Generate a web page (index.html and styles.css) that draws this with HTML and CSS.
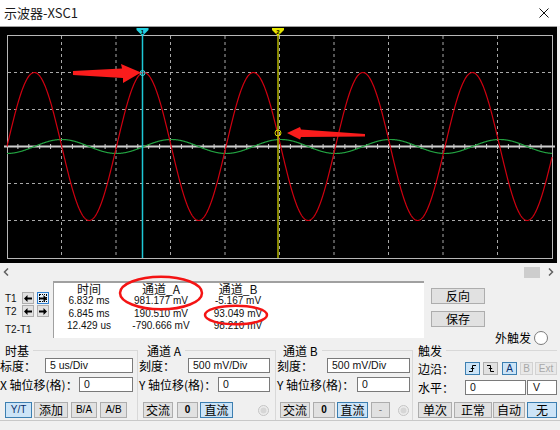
FILE: index.html
```html
<!DOCTYPE html>
<html lang="zh-CN">
<head>
<meta charset="utf-8">
<title>示波器-XSC1</title>
<link rel="stylesheet" href="styles.css">
</head>
<body>
<div class="titlebar">
  <span class="title">示波器-XSC1</span>
  <svg class="close" viewBox="0 0 10 10"><path d="M0.5 0.5L9.5 9.5M9.5 0.5L0.5 9.5"/></svg>
</div>

<div class="scope">
  <svg width="557" height="236" viewBox="0 27 557 236">
    <rect class="frame" x="7.5" y="35.5" width="545" height="223"/>
    <path class="grid" d="M61.5 36V258M116 36V258M170.5 36V258M225 36V258M279.5 36V258M334 36V258M388.5 36V258M443 36V258M497.5 36V258"/>
    <path class="grid" d="M8 72.5H552M8 109.5H552M8 183.5H552M8 220.5H552"/>
    <path class="axis" d="M4 146.5H555"/>
    <path class="ticks" id="ticks" d=""/>
    <polyline class="wave-b" id="wave-b" points=""/>
    <polyline class="wave-a" id="wave-a" points=""/>
    <path class="cur1" d="M142.5 33V258"/>
    <path class="cur2" d="M278 33V258"/>
    <polygon class="mk1" points="136.5,28 148.5,28 148.5,30 142.5,36 136.5,30"/>
    <text class="mk-num" x="142.5" y="33.5" text-anchor="middle">1</text>
    <polygon class="mk2" points="272,28 284,28 284,30 278,36 272,30"/>
    <text class="mk-num" x="278" y="33.5" text-anchor="middle">2</text>
    <circle class="dot1" cx="142.5" cy="73" r="2.5"/>
    <circle class="dot2" cx="278" cy="133" r="3"/>
  </svg>
</div>

<div class="hscroll">
  <svg class="sarrow" viewBox="0 0 6 8"><path d="M5 0.5L1.5 4L5 7.5"/></svg>
  <div class="track"><div class="thumb"></div></div>
  <svg class="sarrow" viewBox="0 0 6 8"><path d="M1 0.5L4.5 4L1 7.5"/></svg>
</div>

<div class="meas">
  <div class="tctrl">
    <span>T1</span>
    <button class="abtn"><svg viewBox="0 0 8 7"><path d="M0 3.5L3.5 0V2.5H8V4.5H3.5V7Z"/></svg></button>
    <button class="abtn on"><svg viewBox="0 0 8 7"><path d="M8 3.5L4.5 0V2.5H0V4.5H4.5V7Z"/></svg></button>
    <span>T2</span>
    <button class="abtn"><svg viewBox="0 0 8 7"><path d="M0 3.5L3.5 0V2.5H8V4.5H3.5V7Z"/></svg></button>
    <button class="abtn"><svg viewBox="0 0 8 7"><path d="M8 3.5L4.5 0V2.5H0V4.5H4.5V7Z"/></svg></button>
    <span class="tdiff">T2-T1</span>
  </div>
  <div class="mtable">
    <span class="hd">时间</span><span class="hd">通道_A</span><span class="hd">通道_B</span>
    <span>6.832 ms</span><span>981.177 mV</span><span>-5.167 mV</span>
    <span>6.845 ms</span><span>190.510 mV</span><span>93.049 mV</span>
    <span>12.429 us</span><span>-790.666 mV</span><span>98.210 mV</span>
  </div>
  <div class="mright">
    <div class="mbtns">
      <button class="btn mbtn">反向</button>
      <button class="btn mbtn">保存</button>
    </div>
    <div class="ext">
      <span>外触发</span>
      <svg class="radio" viewBox="0 0 14 14"><circle cx="7" cy="7" r="6.5"/></svg>
    </div>
  </div>
</div>

<div class="groups">
  <div class="group g-time">
    <div class="ghead"><span>时基</span></div>
    <div class="gbody">
      <div class="row"><span>标度：</span><div class="inp w88">5 us/Div</div></div>
      <div class="row"><span>X 轴位移(格)：</span><div class="inp w54">0</div></div>
      <div class="row btns">
        <button class="btn lt on w27">Y/T</button>
        <button class="btn w34 ml2">添加</button>
        <button class="btn lt w26 ml3">B/A</button>
        <button class="btn lt w27 ml3">A/B</button>
      </div>
    </div>
  </div>
  <div class="group g-a">
    <div class="ghead"><span>通道 A</span></div>
    <div class="gbody">
      <div class="row"><span>刻度：</span><div class="inp w82">500 mV/Div</div></div>
      <div class="row"><span>Y 轴位移(格)：</span><div class="inp w52">0</div></div>
      <div class="row btns">
        <button class="btn w30">交流</button>
        <button class="btn lt b w21 ml4">0</button>
        <button class="btn on w33 ml2">直流</button>
        <svg class="dradio ml25" viewBox="0 0 11 11"><circle class="o" cx="5.5" cy="5.5" r="5"/><circle class="i" cx="5.5" cy="5.5" r="3"/></svg>
      </div>
    </div>
  </div>
  <div class="group g-b">
    <div class="ghead"><span>通道 B</span></div>
    <div class="gbody">
      <div class="row"><span>刻度：</span><div class="inp w83">500 mV/Div</div></div>
      <div class="row"><span>Y 轴位移(格)：</span><div class="inp w53">0</div></div>
      <div class="row btns">
        <button class="btn w30">交流</button>
        <button class="btn lt b w22 ml3">0</button>
        <button class="btn on w31 ml2">直流</button>
        <button class="btn lt dash w19 ml3">-</button>
        <svg class="dradio ml8" viewBox="0 0 11 11"><circle class="o" cx="5.5" cy="5.5" r="5"/><circle class="i" cx="5.5" cy="5.5" r="3"/></svg>
      </div>
    </div>
  </div>
  <div class="group g-trig">
    <div class="ghead"><span>触发</span></div>
    <div class="gbody">
      <div class="row"><span>边沿：</span>
        <div class="edge">
          <button class="btn sm on w15"><svg class="eicon" viewBox="0 0 9 9"><path d="M1 7.5H4.5V1.5H8M2.8 4.5H6.2"/></svg></button>
          <button class="btn sm w15 ml3"><svg class="eicon" viewBox="0 0 9 9"><path d="M1 1.5H4.5V7.5H8M2.8 4.5H6.2"/></svg></button>
          <button class="btn sm lt on w15 ml4">A</button>
          <button class="btn sm lt off w13 ml3">B</button>
          <button class="btn sm lt off w22 ml2">Ext</button>
        </div>
      </div>
      <div class="row"><span>水平：</span><div class="inp w61">0</div><div class="inp vbox">V</div></div>
      <div class="row btns">
        <button class="btn w34">单次</button>
        <button class="btn w38 ml2">正常</button>
        <button class="btn w32 ml1">自动</button>
        <button class="btn on w30 ml2">无</button>
      </div>
    </div>
  </div>
</div>

<svg class="annot" width="560" height="430" viewBox="0 0 560 430">
  <polygon points="73,71 122,68.5 121,64 141,72.5 123,83 123,78 73,75"/>
  <polygon points="287,133 300,127 301,129.5 365,134 365,136.5 301,137 300,139.5"/>
  <ellipse cx="161" cy="293" rx="41" ry="16.3"/>
  <ellipse cx="236" cy="315" rx="31" ry="9.3"/>
</svg>

<script src="script.js"></script>
</body>
</html>
```

FILE: styles.css
```css
* { box-sizing: border-box; }
html, body { margin: 0; padding: 0; }
body {
  width: 560px; height: 430px; overflow: hidden; position: relative;
  background: #f0f0f0; color: #000;
  font-family: "Noto Sans CJK SC", "Liberation Sans", sans-serif;
  font-size: 12px; line-height: 14px;
}

/* title bar */
.titlebar { height: 26px; background: #fff; display: flex; align-items: center; justify-content: space-between; padding: 0 11px 0 4px; }
.title { font-size: 13px; line-height: 16px; color: #1b1b1b; }
.close { display: block; width: 10px; height: 10px; }
.close path { stroke: #111; stroke-width: 1; fill: none; }

/* scope screen */
.scope { width: 557px; height: 237px; border-top: 1px solid #a0a0a0; background: #000; }
.scope svg { display: block; }
.frame { fill: none; stroke: #b8b8b8; stroke-width: 1; }
.grid { fill: none; stroke: #a8a8a8; stroke-width: 1; stroke-dasharray: 3 3; }
.axis { stroke: #cfcfcf; stroke-width: 2; fill: none; }
.ticks { stroke: #cfcfcf; stroke-width: 1; fill: none; }
.wave-a { fill: none; stroke: #d00010; stroke-width: 1.2; }
.wave-b { fill: none; stroke: #22a040; stroke-width: 1.2; }
.cur1 { stroke: #1ec8d6; stroke-width: 1.5; }
.cur2 { stroke: #b4b400; stroke-width: 1.5; }
.mk1 { fill: #22d0e0; }
.mk2 { fill: #e6e600; }
.mk-num { font: bold 6px "Liberation Sans", sans-serif; fill: #000; }
.dot1 { fill: none; stroke: #3ee0e8; stroke-width: 1; }
.dot2 { fill: none; stroke: #d8d800; stroke-width: 1; }

/* scrollbar */
.hscroll { width: 557px; height: 17px; display: flex; align-items: center; padding: 0 3px; }
.sarrow { display: block; width: 6px; height: 8px; }
.sarrow path { fill: none; stroke: #606060; stroke-width: 1.5; }
.track { flex: 1; height: 100%; display: flex; justify-content: flex-end; align-items: flex-end; padding: 0 8px 2px 0; }
.thumb { width: 16px; height: 11px; background: #cdcdcd; }

/* measurement area */
.meas { height: 60px; display: flex; }
.tctrl {
  width: 53px; padding: 12px 0 0 5px;
  display: grid; grid-template-columns: 17px 15px 12px; grid-template-rows: 12px 12px auto;
  row-gap: 1px; align-content: start; align-items: center;
  font-family: "Liberation Sans", sans-serif; font-size: 10px; line-height: 11px; color: #111;
}
.tdiff { grid-column: 1 / -1; margin-top: 6px; }
.abtn { width: 12px; height: 12px; padding: 0; margin: 0; border: 1px solid #adadad; background: #e1e1e1; display: flex; align-items: center; justify-content: center; }
.abtn svg { display: block; width: 8px; height: 7px; }
.abtn path { fill: #000; }
.abtn.on { border-color: #2f7fd0; background: #e5f1fb; outline: 1px dotted #000; outline-offset: -3px; }

.mtable {
  width: 371px; height: 57px; margin-top: 1px; background: #fff;
  border-top: 2px solid #a0a0a0; border-left: 1px solid #a0a0a0; padding-left: 10px;
  display: grid; grid-template-columns: 50px 94px 60px; grid-template-rows: 12px repeat(3, 12.5px);
  align-content: start; text-align: center;
  font-family: "Liberation Sans", sans-serif; font-size: 10px; line-height: 12.5px; color: #111;
}
.mtable .hd { font-family: "Noto Sans CJK SC", sans-serif; font-size: 12px; line-height: 12px; }

.mright { flex: 1; display: flex; padding-left: 7px; }
.mbtns { display: flex; flex-direction: column; gap: 7px; padding-top: 8px; }
.mbtn { width: 54px; height: 20px; }
.ext { align-self: flex-end; margin: 0 0 -5px 10px; display: flex; align-items: center; gap: 3px; line-height: 14px; }
.radio { display: block; width: 14px; height: 14px; }
.radio circle { fill: #fff; stroke: #7a7a7a; stroke-width: 1; }

/* buttons */
.btn {
  font-family: "Noto Sans CJK SC", sans-serif; font-size: 12px; line-height: 14px; color: #000;
  background: #e1e1e1; border: 1px solid #adadad; padding: 0; margin: 0; height: 16px;
  display: flex; align-items: center; justify-content: center;
}
.btn.on { background: #cce4f7; border-color: #3c7fb1; }
.btn.off { background: #e9e9e9; border-color: #d2d2d2; color: #a8a8a8; }
.btn.lt { font-family: "Liberation Sans", sans-serif; font-size: 10px; }
.btn.lt.on { color: #0a2f6a; }
.btn.b { font-weight: bold; }
.btn.dash { color: #777; }
.btn.sm { height: 13px; }
.eicon { display: block; width: 9px; height: 9px; }
.eicon path { fill: none; stroke: #000; stroke-width: 1; }

.w13 { width: 13px; } .w15 { width: 15px; } .w19 { width: 19px; } .w21 { width: 21px; }
.w22 { width: 22px; } .w26 { width: 26px; } .w27 { width: 27px; } .w30 { width: 30px; }
.w31 { width: 31px; } .w32 { width: 32px; } .w33 { width: 33px; } .w34 { width: 34px; }
.w38 { width: 38px; } .w52 { width: 52px; } .w53 { width: 53px; } .w54 { width: 54px; }
.w61 { width: 61px; } .w82 { width: 82px; } .w83 { width: 83px; } .w88 { width: 88px; }
.ml1 { margin-left: 1px; } .ml2 { margin-left: 2px; } .ml3 { margin-left: 3px; } .ml4 { margin-left: 4px; }
.ml8 { margin-left: 8px; } .ml25 { margin-left: 25px; }

/* control groups */
.groups { height: 81px; display: flex; border-bottom: 1px solid #c8c8c8; }
.group { display: flex; flex-direction: column; }
.g-time { width: 138px; }
.g-a { width: 138px; }
.g-b { width: 137px; }
.g-trig { width: 144px; }
.ghead { height: 18px; display: flex; align-items: flex-start; }
.ghead span { margin-top: 4px; line-height: 13px; }
.ghead::after { content: ""; flex: 1; height: 8px; margin-top: 10px; margin-left: 4px; border-top: 1px solid #d8d8d8; border-right: 1px solid #d8d8d8; }
.g-time .ghead span { margin-left: 5px; }
.g-a .ghead span { margin-left: 9px; }
.g-b .ghead span { margin-left: 7px; }
.g-trig .ghead span { margin-left: 5px; }
.g-trig .ghead::after { border-right: none; }

.gbody { flex: 1; border-right: 1px solid #d8d8d8; display: flex; flex-direction: column; }
.g-time .gbody { padding: 0 4px 0 0; }
.g-a .gbody { padding: 0 5px 0 1px; }
.g-b .gbody { padding: 0 2px 0 1px; }
.g-trig .gbody { padding: 0 0 0 5px; border-right: none; }

.row { height: 15px; display: flex; align-items: center; white-space: nowrap; }
.row + .row { margin-top: 4px; }
.row.btns { height: 16px; margin-top: 10px; }
.g-time .row.btns { padding-left: 5px; }
.g-a .row.btns { padding-left: 4px; }
.g-b .row.btns { padding-left: 3px; }
.g-trig .row:first-child { margin-top: 3px; }
.g-trig .row.btns { margin-top: 7px; }

.inp {
  height: 15px; background: #fff; border: 1px solid #7a7a7a; margin-left: auto;
  font-family: "Liberation Sans", sans-serif; font-size: 10.5px; line-height: 13px; padding-left: 4px; color: #111;
}
.inp.vbox { width: 30px; margin-left: 1px; padding-left: 5px; }
.edge { margin-left: auto; display: flex; align-items: center; }

.dradio { display: block; width: 11px; height: 11px; }
.dradio .o { fill: #ececec; stroke: #c4c4c4; stroke-width: 1; }
.dradio .i { fill: #d6d6d6; }

/* annotations drawn over the screenshot */
.annot { position: absolute; left: 0; top: 0; pointer-events: none; }
.annot polygon { fill: #fa1c1c; }
.annot ellipse { fill: none; stroke: #f41414; stroke-width: 2.5; }
```

FILE: script.js
```js
(function () {
  var P = 109.5, X0 = 7;
  function pts(f) {
    var a = [];
    for (var x = 7; x <= 552; x += 0.5) a.push(x + ',' + f(x).toFixed(2));
    return a.join(' ');
  }
  document.getElementById('wave-a').setAttribute('points', pts(function (x) {
    return 146.5 - 74 * Math.sin(2 * Math.PI * (x - X0) / P);
  }));
  document.getElementById('wave-b').setAttribute('points', pts(function (x) {
    return 146.5 + 7 * Math.cos(2 * Math.PI * (x - X0) / P);
  }));
  var d = '';
  for (var k = 1; k < 50; k++) {
    var x = (7 + 10.9 * k).toFixed(1);
    d += 'M' + x + ' 144V149';
  }
  document.getElementById('ticks').setAttribute('d', d);
})();
```
